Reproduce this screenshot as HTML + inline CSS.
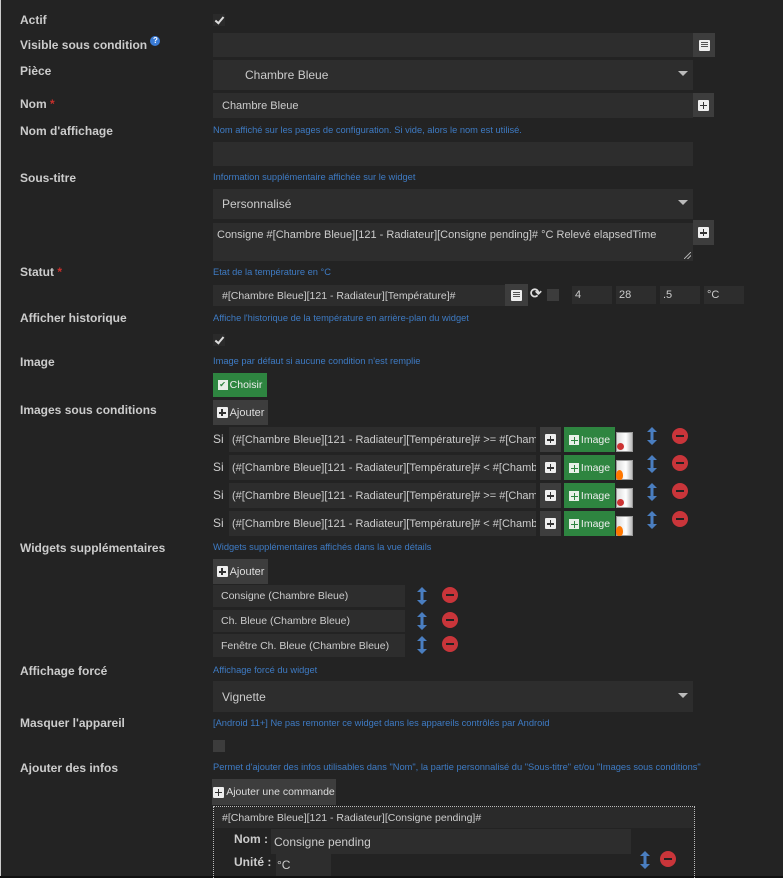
<!DOCTYPE html>
<html><head><meta charset="utf-8"><style>
*{box-sizing:border-box;margin:0;padding:0}
body{width:783px;height:878px;background:#232323;position:relative;overflow:hidden;font-family:"Liberation Sans",sans-serif;color:#ccc}
.a{position:absolute;white-space:nowrap}
.lbl{position:absolute;left:20px;font-weight:bold;font-size:12px;color:#ccc;white-space:nowrap}
.req{color:#c9302c}
.help{position:absolute;left:213px;font-size:9.3px;color:#3e7bc4;white-space:nowrap}
.inp{position:absolute;background:#2d2d2d;font-size:11px;color:#ccc;padding-left:9px;display:flex;align-items:center;white-space:nowrap;overflow:hidden}
.btn{position:absolute;background:#3d3d3d;display:flex;align-items:center;justify-content:center;font-size:11px;color:#ddd;white-space:nowrap}
.ico{width:11px;height:11px;background:#eee;border-radius:1px;display:inline-block;position:relative}
.plus::before{content:"";position:absolute;left:2px;top:5px;width:7px;height:1.6px;background:#333}
.plus::after{content:"";position:absolute;left:4.7px;top:2px;width:1.6px;height:7px;background:#333}
.list::before{content:"";position:absolute;left:2px;top:2.5px;width:7px;height:6px;background:repeating-linear-gradient(#555 0 1px,transparent 1px 2px)}
.cb{position:absolute;width:12px;height:12px;background:#3c3c3c}
.cb.on::after{content:"";position:absolute;left:4px;top:1px;width:3px;height:7px;border:solid #ddd;border-width:0 2px 2px 0;transform:rotate(40deg)}
.green{position:absolute;background:#2e8540;color:#eee;font-size:10.5px;display:flex;align-items:center;justify-content:center;gap:2px}
.gi{width:10px;height:10px;background:#e8f0e8;display:inline-block;position:relative}
.gi.plus::before{background:#2e8540}.gi.plus::after{background:#2e8540}
.arr{position:absolute;width:10px;height:18px}
.minus{position:absolute;width:16px;height:16px;border-radius:50%;background:#c9353a}
.minus::after{content:"";position:absolute;left:4px;top:7px;width:8px;height:2px;background:#222}
.caret{position:absolute;width:0;height:0;border-left:5px solid transparent;border-right:5px solid transparent;border-top:5px solid #bbb}
.rad{position:absolute;width:17px;height:20px;background:linear-gradient(90deg,#ddd,#fff 60%,#bbb);border:1px solid #999}
</style></head><body>
<div class="a" style="left:0;top:0;width:1px;height:876px;background:#ccc"></div>
<div class="a" style="left:0;top:876px;width:783px;height:2px;background:#111"></div>

<div class="lbl" style="top:13px">Actif</div>
<div class="cb on" style="left:213px;top:14px;background:#2a2a2a"></div>

<div class="lbl" style="top:36px">Visible sous condition <span style="display:inline-block;width:10px;height:10px;border-radius:50%;background:#3a7bd5;color:#fff;font-size:8px;text-align:center;line-height:10px;vertical-align:6px">?</span></div>
<div class="inp" style="left:213px;top:33px;width:480px;height:24px"></div>
<div class="btn" style="left:693px;top:33px;width:22px;height:24px"><span class="ico list"></span></div>

<div class="lbl" style="top:64px">Pièce</div>
<div class="inp" style="left:213px;top:60px;width:480px;height:30px;padding-left:32px;font-size:12px">Chambre Bleue</div>
<div class="caret" style="left:678px;top:71px"></div>

<div class="lbl" style="top:97px">Nom <span class="req">*</span></div>
<div class="inp" style="left:213px;top:93px;width:480px;height:25px">Chambre Bleue</div>
<div class="btn" style="left:693px;top:93px;width:21px;height:24px"><span class="ico plus"></span></div>

<div class="lbl" style="top:124px">Nom d'affichage</div>
<div class="help" style="top:125px">Nom affiché sur les pages de configuration. Si vide, alors le nom est utilisé.</div>
<div class="inp" style="left:213px;top:142px;width:480px;height:24px"></div>

<div class="lbl" style="top:171px">Sous-titre</div>
<div class="help" style="top:172px">Information supplémentaire affichée sur le widget</div>
<div class="inp" style="left:213px;top:189px;width:480px;height:30px;font-size:12px">Personnalisé</div>
<div class="caret" style="left:678px;top:200px"></div>
<div class="inp" style="left:213px;top:223px;width:480px;height:38px;font-size:11px;align-items:flex-start;padding-top:6px;padding-left:4px">Consigne #[Chambre Bleue][121 - Radiateur][Consigne pending]# °C Relevé elapsedTime</div>
<div class="a" style="left:684px;top:252px;width:7px;height:7px;background:linear-gradient(135deg,transparent 45%,#aaa 45%,#aaa 55%,transparent 55%,transparent 70%,#aaa 70%,#aaa 80%,transparent 80%)"></div>
<div class="btn" style="left:693px;top:220px;width:21px;height:25px"><span class="ico plus"></span></div>

<div class="lbl" style="top:265px">Statut <span class="req">*</span></div>
<div class="help" style="top:267px">Etat de la température en °C</div>
<div class="inp" style="left:213px;top:285px;width:292px;height:21px;font-size:10.5px">#[Chambre Bleue][121 - Radiateur][Température]#</div>
<div class="btn" style="left:505px;top:284px;width:23px;height:22px"><span class="ico list"></span></div>
<div class="a" style="left:530px;top:285px;font-size:14px;color:#ddd;font-weight:bold">⟳</div>
<div class="cb" style="left:547px;top:289px"></div>
<div class="inp" style="left:572px;top:286px;width:40px;height:18px;padding-left:3px">4</div>
<div class="inp" style="left:616px;top:286px;width:40px;height:18px;padding-left:3px">28</div>
<div class="inp" style="left:660px;top:286px;width:40px;height:18px;padding-left:3px">.5</div>
<div class="inp" style="left:704px;top:286px;width:40px;height:18px;padding-left:3px">°C</div>

<div class="lbl" style="top:311px">Afficher historique</div>
<div class="help" style="top:313px">Affiche l'historique de la température en arrière-plan du widget</div>
<div class="cb on" style="left:213px;top:334px;background:#2a2a2a"></div>

<div class="lbl" style="top:355px">Image</div>
<div class="help" style="top:356px">Image par défaut si aucune condition n'est remplie</div>
<div class="green" style="left:213px;top:373px;width:54px;height:24px"><span class="gi" style="font-size:8px;color:#2e8540;line-height:10px;text-align:center">✔</span>Choisir</div>

<div class="lbl" style="top:403px">Images sous conditions</div>
<div class="btn" style="left:213px;top:400px;width:55px;height:25px;gap:2px"><span class="ico plus"></span>Ajouter</div>

<div class="a" style="left:213px;top:432px;font-size:12px">Si</div>
<div class="inp" style="left:229px;top:427px;width:307px;height:25px;font-size:11px;padding-left:3px">(#[Chambre Bleue][121 - Radiateur][Température]# &gt;= #[Chambre</div>
<div class="a" style="left:213px;top:460px;font-size:12px">Si</div>
<div class="inp" style="left:229px;top:455px;width:307px;height:25px;font-size:11px;padding-left:3px">(#[Chambre Bleue][121 - Radiateur][Température]# &lt; #[Chambre</div>
<div class="a" style="left:213px;top:488px;font-size:12px">Si</div>
<div class="inp" style="left:229px;top:483px;width:307px;height:25px;font-size:11px;padding-left:3px">(#[Chambre Bleue][121 - Radiateur][Température]# &gt;= #[Chambre</div>
<div class="a" style="left:213px;top:516px;font-size:12px">Si</div>
<div class="inp" style="left:229px;top:511px;width:307px;height:25px;font-size:11px;padding-left:3px">(#[Chambre Bleue][121 - Radiateur][Température]# &lt; #[Chambre</div>

<div class="btn" style="left:540px;top:427px;width:21px;height:25px"><span class="ico plus"></span></div>
<div class="btn" style="left:540px;top:455px;width:21px;height:25px"><span class="ico plus"></span></div>
<div class="btn" style="left:540px;top:483px;width:21px;height:25px"><span class="ico plus"></span></div>
<div class="btn" style="left:540px;top:511px;width:21px;height:25px"><span class="ico plus"></span></div>
<div class="green" style="left:564px;top:427px;width:51px;height:25px"><span class="gi plus"></span>Image</div>
<div class="green" style="left:564px;top:455px;width:51px;height:25px"><span class="gi plus"></span>Image</div>
<div class="green" style="left:564px;top:483px;width:51px;height:25px"><span class="gi plus"></span>Image</div>
<div class="green" style="left:564px;top:511px;width:51px;height:25px"><span class="gi plus"></span>Image</div>
<div class="rad" style="left:616px;top:432px"></div><div class="a" style="left:617px;top:443px;width:7px;height:7px;border-radius:50%;background:#c33"></div>
<div class="rad" style="left:616px;top:460px"></div><div class="a" style="left:616px;top:470px;width:7px;height:10px;border-radius:50% 50% 40% 40%;background:#f70"></div>
<div class="rad" style="left:616px;top:488px"></div><div class="a" style="left:617px;top:499px;width:7px;height:7px;border-radius:50%;background:#c33"></div>
<div class="rad" style="left:616px;top:516px"></div><div class="a" style="left:616px;top:526px;width:7px;height:10px;border-radius:50% 50% 40% 40%;background:#f70"></div>

<svg width="0" height="0" style="position:absolute"><defs><symbol id="ar" viewBox="0 0 10 18"><path d="M5 0L10 5H6.5V13H10L5 18L0 13H3.5V5H0Z" fill="#4a7ec0"/></symbol></defs></svg>
<svg class="arr" style="left:647px;top:427px"><use href="#ar"/></svg>
<svg class="arr" style="left:647px;top:455px"><use href="#ar"/></svg>
<svg class="arr" style="left:647px;top:483px"><use href="#ar"/></svg>
<svg class="arr" style="left:647px;top:511px"><use href="#ar"/></svg>
<div class="minus" style="left:672px;top:428px"></div>
<div class="minus" style="left:672px;top:455px"></div>
<div class="minus" style="left:672px;top:483px"></div>
<div class="minus" style="left:672px;top:511px"></div>

<div class="lbl" style="top:541px">Widgets supplémentaires</div>
<div class="help" style="top:542px">Widgets supplémentaires affichés dans la vue détails</div>
<div class="btn" style="left:213px;top:559px;width:55px;height:25px;gap:2px"><span class="ico plus"></span>Ajouter</div>
<div class="inp" style="left:213px;top:585px;width:192px;height:22px;font-size:10.5px;padding-left:8px">Consigne (Chambre Bleue)</div>
<div class="inp" style="left:213px;top:610px;width:192px;height:22px;font-size:10.5px;padding-left:8px">Ch. Bleue (Chambre Bleue)</div>
<div class="inp" style="left:213px;top:634px;width:192px;height:23px;font-size:10.5px;padding-left:8px">Fenêtre Ch. Bleue (Chambre Bleue)</div>
<svg class="arr" style="left:417px;top:587px"><use href="#ar"/></svg>
<svg class="arr" style="left:417px;top:612px"><use href="#ar"/></svg>
<svg class="arr" style="left:417px;top:636px"><use href="#ar"/></svg>
<div class="minus" style="left:442px;top:587px"></div>
<div class="minus" style="left:442px;top:612px"></div>
<div class="minus" style="left:442px;top:636px"></div>

<div class="lbl" style="top:664px">Affichage forcé</div>
<div class="help" style="top:665px">Affichage forcé du widget</div>
<div class="inp" style="left:213px;top:681px;width:480px;height:31px;font-size:12px">Vignette</div>
<div class="caret" style="left:678px;top:693px"></div>

<div class="lbl" style="top:716px">Masquer l'appareil</div>
<div class="help" style="top:718px">[Android 11+] Ne pas remonter ce widget dans les appareils contrôlés par Android</div>
<div class="cb" style="left:213px;top:740px"></div>

<div class="lbl" style="top:761px">Ajouter des infos</div>
<div class="help" style="top:762px">Permet d'ajouter des infos utilisables dans "Nom", la partie personnalisé du "Sous-titre" et/ou "Images sous conditions"</div>
<div class="btn" style="left:212px;top:779px;width:124px;height:26px;gap:2px;font-size:10.5px"><span class="ico plus"></span>Ajouter une commande</div>

<div class="a" style="left:213px;top:806px;width:482px;height:72px;border:1px dotted #bbb;border-bottom:none"></div>
<div class="a" style="left:214px;top:807px;width:480px;height:21px;background:#2a2a2a"></div>
<div class="a" style="left:222px;top:812px;font-size:10.5px">#[Chambre Bleue][121 - Radiateur][Consigne pending]#</div>
<div class="a" style="left:234px;top:832px;font-size:12px;font-weight:bold">Nom :</div>
<div class="inp" style="left:271px;top:829px;width:360px;height:25px;font-size:12px;padding-left:3px">Consigne pending</div>
<div class="a" style="left:234px;top:855px;font-size:12px;font-weight:bold">Unité :</div>
<div class="inp" style="left:276px;top:853px;width:55px;height:23px;font-size:12px;padding-left:1px">°C</div>
<svg class="arr" style="left:640px;top:851px"><use href="#ar"/></svg>
<div class="minus" style="left:660px;top:851px"></div>
</body></html>
